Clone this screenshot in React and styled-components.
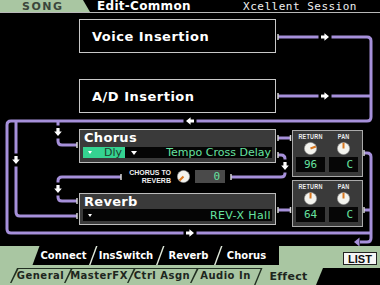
import React from 'react'
import styled, { createGlobalStyle } from 'styled-components'

const GREEN = '#a9c6a2'
const PURPLE = '#a690da'
const LCD = '#66e3a0'

const Global = createGlobalStyle`
  *, *::before, *::after { box-sizing: border-box; }
  html, body { margin: 0; padding: 0; background: #000; }
  body { font-family: "DejaVu Sans", sans-serif; }
`

const Screen = styled.div`
  position: relative;
  width: 380px;
  height: 285px;
  overflow: hidden;
  background: #000;
  display: flex;
  flex-direction: column;
  font-family: "DejaVu Sans", "Liberation Sans", sans-serif;
`

const Header = styled.header`
  position: relative;
  flex-shrink: 0;
  height: 13px;
  display: flex;
  align-items: center;
  border-bottom: 1px solid #b8b8b8;
`

const ModeTab = styled.div`
  align-self: stretch;
  width: 90px;
  padding-left: 22px;
  display: flex;
  align-items: center;
  background: ${GREEN};
  clip-path: polygon(0 0, 83px 0, 90px 100%, 0 100%);
  color: #3b463b;
  font-weight: bold;
  font-size: 11px;
  letter-spacing: 1.5px;
`

const PageTitle = styled.div`
  margin-left: 7px;
  color: #fff;
  font-weight: bold;
  font-size: 12px;
  letter-spacing: 0.3px;
`

const SongName = styled.div`
  margin-left: auto;
  margin-right: 23px;
  color: #f0f0f0;
  font-family: "DejaVu Sans Mono", monospace;
  font-size: 11px;
  letter-spacing: 0.5px;
`

const Canvas = styled.main`
  position: relative;
  flex-shrink: 0;
  height: 233px;
  padding: 6px 0 0 79px;
  display: flex;
  flex-direction: column;
  align-items: flex-start;
`

const FlowLines = styled.svg`
  position: absolute;
  top: 0;
  left: 0;
  pointer-events: none;
`

const InsertBox = styled.div`
  position: relative;
  width: 197px;
  height: 34px;
  margin-top: ${p => p.$mt || 0}px;
  padding-left: 12px;
  display: flex;
  align-items: center;
  background: #000;
  border: 1px solid #c8c8c8;
  color: #fff;
  font-weight: bold;
  font-size: 13px;
  letter-spacing: 0.5px;
`

const FxArea = styled.div`
  display: flex;
  margin-top: 16px;
`

const LeftCol = styled.div`
  width: 197px;
  display: flex;
  flex-direction: column;
`

const RightCol = styled.div`
  display: flex;
  flex-direction: column;
  gap: 3px;
  margin: 1px 0 0 16px;
`

const FxBox = styled.div`
  position: relative;
  height: ${p => p.$h}px;
  padding: 0 3px;
  display: flex;
  flex-direction: column;
  background: #3a3a3a;
  border: 1px solid #bcbcbc;
`

const FxTitle = styled.div`
  color: #fff;
  font-weight: bold;
  font-size: 13px;
  line-height: ${p => p.$lh}px;
  letter-spacing: 0.3px;
  padding-left: 1px;
`

const FxRow = styled.div`
  height: ${p => p.$h}px;
  margin-top: ${p => p.$mt || 0}px;
  padding-left: ${p => p.$pl || 0}px;
  display: flex;
  align-items: center;
  background: #050505;
`

const TypeChip = styled.div`
  width: 42px;
  height: 100%;
  padding: 0 3px 0 5px;
  display: flex;
  align-items: center;
  justify-content: space-between;
  background: #35d391;
  color: #1f3a2c;
  font-size: 11px;
`

const Caret = styled.span`
  display: inline-block;
  width: 0;
  height: 0;
  margin-left: ${p => p.$ml || 0}px;
  border-left: ${p => p.$s}px solid transparent;
  border-right: ${p => p.$s}px solid transparent;
  border-top: ${p => p.$s + 1}px solid #fff;
`

const FxName = styled.div`
  flex: 1;
  padding-right: 1px;
  text-align: right;
  color: ${LCD};
  font-size: 11px;
  letter-spacing: ${p => p.$ls || 0}px;
  white-space: nowrap;
`

const SendRow = styled.div`
  height: 30px;
  padding: 0 0 3px 50px;
  display: flex;
  align-items: center;
`

const SendLabel = styled.div`
  width: 42px;
  text-align: right;
  white-space: nowrap;
  color: #eee;
  font-family: "Liberation Sans", Arial, sans-serif;
  font-weight: bold;
  font-size: 7px;
  line-height: 8px;
`

const SendValue = styled.div`
  width: 30px;
  height: 13px;
  margin-left: 5px;
  padding-right: 5px;
  display: flex;
  align-items: center;
  justify-content: flex-end;
  background: #4a4a4a;
  color: ${LCD};
  font-family: "DejaVu Sans Mono", monospace;
  font-size: 11px;
`

const ReturnPanel = styled.div`
  position: relative;
  width: 71px;
  height: 47px;
  padding: 2px 4px 0 3px;
  display: grid;
  grid-template-columns: 29px 29px;
  grid-template-rows: 7px 17px 15px;
  column-gap: 4px;
  background: #3a3a3a;
  border: 1px solid #aaaaaa;
`

const PanelLabel = styled.span`
  justify-self: center;
  align-self: center;
  transform: scaleX(0.78);
  color: #eee;
  font-family: "Liberation Sans", Arial, sans-serif;
  font-weight: bold;
  font-size: 7px;
  line-height: 7px;
  letter-spacing: 0.3px;
`

const KnobSvg = styled.svg`
  justify-self: center;
  align-self: center;
  margin-left: ${p => p.$ml || 0}px;
  display: block;
`

const ValueBox = styled.div`
  display: flex;
  align-items: center;
  justify-content: ${p => (p.$right ? 'flex-end' : 'center')};
  padding-right: ${p => (p.$right ? 5 : 0)}px;
  background: #060606;
  color: ${LCD};
  font-family: "DejaVu Sans Mono", monospace;
  font-size: 11px;
`

const Footer = styled.footer`
  position: relative;
  flex-shrink: 0;
  height: 39px;
  display: flex;
  flex-direction: column;
  background: ${GREEN};
`

const TabRow = styled.div`
  height: ${p => p.$h}px;
  padding-left: ${p => p.$pl}px;
  display: flex;
  align-items: flex-start;
`

const Tab = styled.div`
  position: relative;
  width: ${p => p.$w}px;
  height: ${p => p.$h}px;
  margin-left: ${p => (p.$first ? 0 : -7)}px;
  padding: 0 7px;
  display: flex;
  align-items: center;
  justify-content: center;
  background: ${p => p.$edge};
  clip-path: polygon(7px 0, 100% 0, 100% 100%, 0 100%);

  &::before {
    content: '';
    position: absolute;
    inset: ${p => p.$top}px 0 0 0;
    background: ${p => p.$face};
    clip-path: polygon(8.5px 0, 100% 0, 100% 100%, 1.5px 100%);
  }
`

const TabText = styled.span`
  position: relative;
  color: ${p => p.$color};
  font-weight: bold;
  font-size: ${p => p.$size || 10}px;
  letter-spacing: ${p => p.$ls || 0}px;
  white-space: nowrap;
`

const ListButton = styled.div`
  width: 34px;
  height: 13px;
  margin: 6px 3px 0 auto;
  display: flex;
  align-items: center;
  justify-content: center;
  background: #f6f6f6;
  border: 1px solid #222;
  color: #111;
  font-family: "Liberation Sans", Arial, sans-serif;
  font-weight: bold;
  font-size: 11px;
`

const BlackFill = styled.div`
  flex: 1;
  align-self: stretch;
  margin-left: -7px;
  background: #000;
  clip-path: polygon(7px 0, 100% 0, 100% 100%, 0 100%);
`

const ARROW = '-4,-1.6 -0.6,-1.6 -0.6,-3.8 4,0 -0.6,3.8 -0.6,1.6 -4,1.6'

const Arrow = ({ x, y, dir = 0 }) => (
  <g transform={`translate(${x} ${y}) rotate(${dir})`}>
    <rect x="-6.5" y="-2.5" width="13" height="5" fill="#000" />
    <polygon points={ARROW} fill="#fff" />
  </g>
)

const Tick = ({ x, y }) => <rect x={x - 0.75} y={y - 3} width="1.5" height="6" fill="#d4d4d4" />

const paths = [
  'M278 37 H367 Q371 37 371 41 V117 Q371 121 367 121 H11 Q7 121 7 125 V229 Q7 233 11 233 H371',
  'M278 96 H371',
  'M16 121 V212 Q16 216 20 216 H77',
  'M58 121 V141 Q58 145 62 145 H77',
  'M278 155 H281 Q285 155 285 159 V173 Q285 177 281 177 H231',
  'M121 177 H62 Q58 177 58 181 V197 Q58 201 62 201 H77',
  'M278 138 H291',
  'M278 210 H291',
  'M364 153 H367 Q371 153 371 157 V238 Q371 242 367 242 H360',
  'M364 210 H371',
]

const arrows = [
  [325, 37, 0], [325, 96, 0], [190, 121, 180], [190, 233, 0],
  [58, 132, 90], [16, 160, 90], [285, 166, 90], [58, 189, 90],
]

const ticks = [
  [278, 37], [278, 96], [77, 145], [77, 201], [77, 216], [278, 138], [290.5, 138],
  [278, 210], [290.5, 210], [278, 155], [364, 153], [364, 210], [231, 177], [121, 177],
]

const SignalFlow = () => (
  <FlowLines width="380" height="285" viewBox="0 0 380 285">
    {paths.map(d => (
      <path key={d} d={d} fill="none" stroke={PURPLE} strokeWidth="3" />
    ))}
    {arrows.map(([x, y, dir]) => <Arrow key={`${x}-${y}`} x={x} y={y} dir={dir} />)}
    {ticks.map(([x, y]) => <Tick key={`${x}-${y}`} x={x} y={y} />)}
    <polygon points="354,242 359.5,237.5 359.5,246.5" fill={PURPLE} />
  </FlowLines>
)

const Knob = ({ value, max = 127, center = false, ml }) => {
  const size = 13
  const r = size / 2
  const t = center ? 0.5 : value / max
  const deg = -135 + 270 * t
  const rad = ((deg - 90) * Math.PI) / 180
  return (
    <KnobSvg width={size} height={size} viewBox={`0 0 ${size} ${size}`} $ml={ml}>
      <circle cx={r} cy={r} r={r - 0.4} fill="#f3f3ee" stroke="#9a9a9a" strokeWidth="0.6" />
      <line
        x1={r}
        y1={r}
        x2={r + Math.cos(rad) * (r - 0.8)}
        y2={r + Math.sin(rad) * (r - 0.8)}
        stroke="#d9771f"
        strokeWidth="2"
      />
    </KnobSvg>
  )
}

const ReturnBlock = ({ value }) => (
  <ReturnPanel>
    <PanelLabel>RETURN</PanelLabel>
    <PanelLabel>PAN</PanelLabel>
    <Knob value={value} />
    <Knob center />
    <ValueBox>{value}</ValueBox>
    <ValueBox $right>C</ValueBox>
  </ReturnPanel>
)

const topTabs = [
  { label: 'Connect', w: 65, selected: true },
  { label: 'InsSwitch', w: 74 },
  { label: 'Reverb', w: 65 },
  { label: 'Chorus', w: 65 },
]

const bottomTabs = [
  { label: 'General', w: 61 },
  { label: 'MasterFX', w: 70 },
  { label: 'Ctrl Asgn', w: 70 },
  { label: 'Audio In', w: 71 },
  { label: 'Effect', w: 69, selected: true },
]

export default function App() {
  return (
    <>
      <Global />
      <Screen>
        <SignalFlow />
        <Header>
          <ModeTab>SONG</ModeTab>
          <PageTitle>Edit-Common</PageTitle>
          <SongName>Xcellent Session</SongName>
        </Header>

        <Canvas>
          <InsertBox>Voice Insertion</InsertBox>
          <InsertBox $mt={26}>A/D Insertion</InsertBox>

          <FxArea>
            <LeftCol>
              <FxBox $h={34}>
                <FxTitle $lh={16}>Chorus</FxTitle>
                <FxRow $h={11} $mt={1}>
                  <TypeChip>
                    <Caret $s={2.5} />
                    <span>Dly</span>
                  </TypeChip>
                  <Caret $s={3} $ml={6} />
                  <FxName>Tempo Cross Delay</FxName>
                </FxRow>
              </FxBox>

              <SendRow>
                <SendLabel>
                  CHORUS TO
                  <br />
                  REVERB
                </SendLabel>
                <Knob value={0} ml={6} />
                <SendValue>0</SendValue>
              </SendRow>

              <FxBox $h={32}>
                <FxTitle $lh={15}>Reverb</FxTitle>
                <FxRow $h={12} $pl={5}>
                  <Caret $s={2} />
                  <FxName $ls={0.4}>REV-X Hall</FxName>
                </FxRow>
              </FxBox>
            </LeftCol>

            <RightCol>
              <ReturnBlock value={96} />
              <ReturnBlock value={64} />
            </RightCol>
          </FxArea>
        </Canvas>

        <Footer>
          <TabRow $h={22} $pl={31}>
            {topTabs.map((t, i) => (
              <Tab
                key={t.label}
                $w={t.w}
                $h={19}
                $first={i === 0}
                $top={0}
                $edge={t.selected ? GREEN : '#dfe8da'}
                $face="#000"
              >
                <TabText $color="#fff">{t.label}</TabText>
              </Tab>
            ))}
            <ListButton>LIST</ListButton>
          </TabRow>
          <TabRow $h={17} $pl={10}>
            {bottomTabs.map((t, i) => (
              <Tab
                key={t.label}
                $w={t.w}
                $h={t.selected ? 17 : 15}
                $first={i === 0}
                $top={t.selected ? 0 : 1}
                $edge="#223022"
                $face={GREEN}
              >
                <TabText
                  $color="#1e261e"
                  $size={t.selected ? 11 : 10}
                  $ls={t.selected ? 0.3 : 0.5}
                >
                  {t.label}
                </TabText>
              </Tab>
            ))}
            <BlackFill />
          </TabRow>
        </Footer>
      </Screen>
    </>
  )
}
